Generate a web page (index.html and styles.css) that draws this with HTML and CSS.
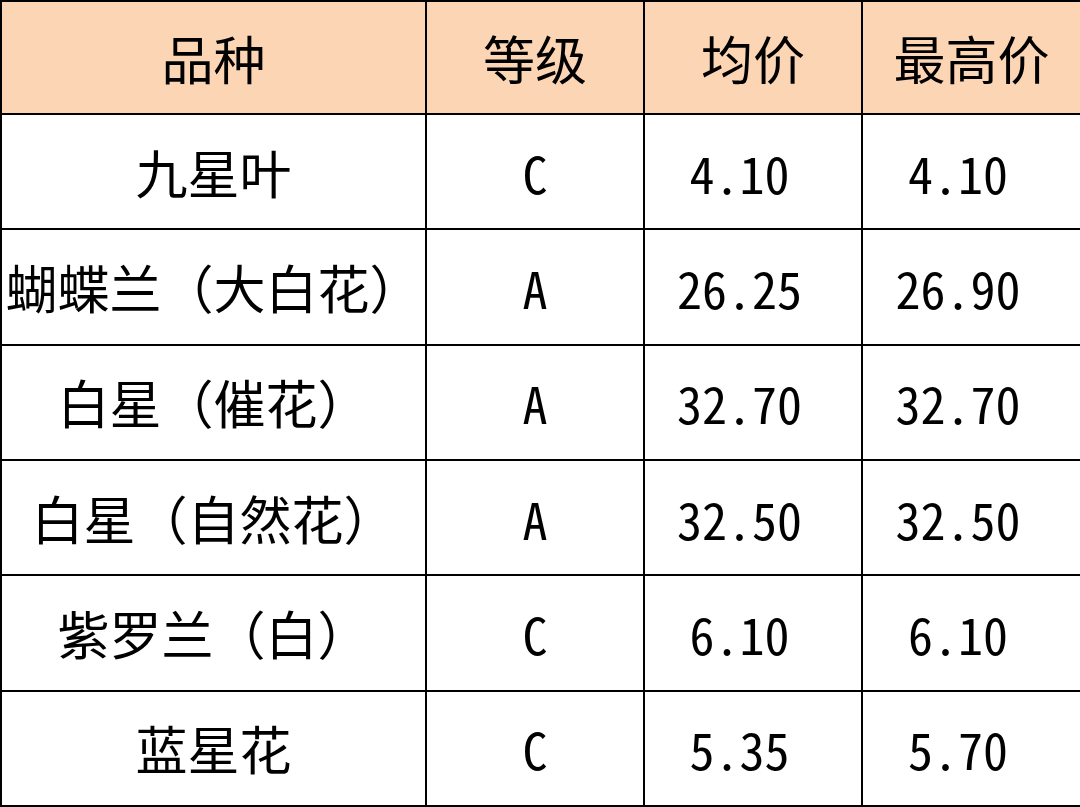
FILE: index.html
```html
<!DOCTYPE html>
<html lang="zh-CN">
<head>
<meta charset="utf-8">
<link rel="stylesheet" href="styles.css">
</head>
<body>
<table class="price-table">
  <colgroup>
    <col class="c-name"><col class="c-grade"><col class="c-avg"><col class="c-max">
  </colgroup>
  <thead>
    <tr><th>品种</th><th>等级</th><th>均价</th><th>最高价</th></tr>
  </thead>
  <tbody>
    <tr><td>九星叶</td><td class="num">C</td><td class="num price">4.10</td><td class="num price">4.10</td></tr>
    <tr><td>蝴蝶兰（大白花）</td><td class="num">A</td><td class="num price">26.25</td><td class="num price">26.90</td></tr>
    <tr><td>白星（催花）</td><td class="num">A</td><td class="num price">32.70</td><td class="num price">32.70</td></tr>
    <tr><td>白星（自然花）</td><td class="num">A</td><td class="num price">32.50</td><td class="num price">32.50</td></tr>
    <tr><td>紫罗兰（白）</td><td class="num">C</td><td class="num price">6.10</td><td class="num price">6.10</td></tr>
    <tr><td>蓝星花</td><td class="num">C</td><td class="num price">5.35</td><td class="num price">5.70</td></tr>
  </tbody>
</table>
</body>
</html>
```
FILE: styles.css
```css
html, body {
  margin: 0;
  padding: 0;
  background: #ffffff;
}
.price-table {
  width: 1080px;
  height: 807px;
  border-collapse: collapse;
  table-layout: fixed;
  font-family: "Noto Sans CJK SC", "Noto Sans", sans-serif;
  font-size: 52px;
  color: #000000;
}
.c-name { width: 425px; }
.c-grade { width: 218px; }
.c-avg { width: 218px; }
.c-max { width: 219px; }
.price-table th,
.price-table td {
  border: 2px solid #000000;
  text-align: center;
  vertical-align: middle;
  padding: 0;
  font-weight: normal;
  white-space: nowrap;
  height: 111px;
  line-height: 1;
}
.price-table th {
  background: #fcd5b4;
}
.price-table .num {
  font-size: 50px;
  font-feature-settings: "hwid" 1;
}
.price-table .price {
  padding-right: 27px;
}
```
